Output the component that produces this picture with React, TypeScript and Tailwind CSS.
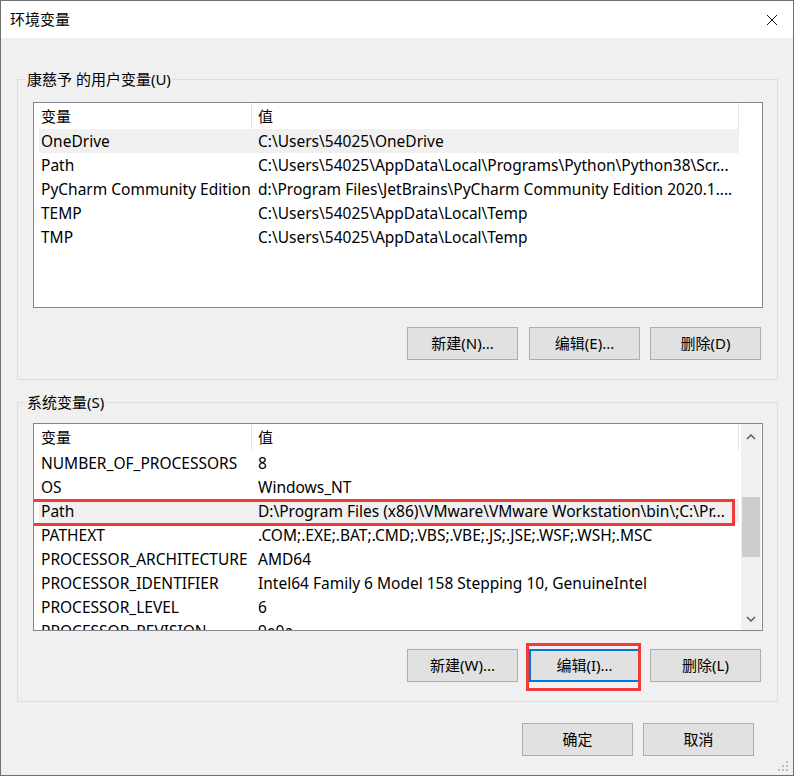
import React from "react";

type Row = [string, string];

const userRows: Row[] = [
  ["OneDrive", "C:\\Users\\54025\\OneDrive"],
  ["Path", "C:\\Users\\54025\\AppData\\Local\\Programs\\Python\\Python38\\Scr..."],
  ["PyCharm Community Edition", "d:\\Program Files\\JetBrains\\PyCharm Community Edition 2020.1...."],
  ["TEMP", "C:\\Users\\54025\\AppData\\Local\\Temp"],
  ["TMP", "C:\\Users\\54025\\AppData\\Local\\Temp"],
];

const sysRows: Row[] = [
  ["NUMBER_OF_PROCESSORS", "8"],
  ["OS", "Windows_NT"],
  ["Path", "D:\\Program Files (x86)\\VMware\\VMware Workstation\\bin\\;C:\\Pr..."],
  ["PATHEXT", ".COM;.EXE;.BAT;.CMD;.VBS;.VBE;.JS;.JSE;.WSF;.WSH;.MSC"],
  ["PROCESSOR_ARCHITECTURE", "AMD64"],
  ["PROCESSOR_IDENTIFIER", "Intel64 Family 6 Model 158 Stepping 10, GenuineIntel"],
  ["PROCESSOR_LEVEL", "6"],
  ["PROCESSOR_REVISION", "9e0a"],
];

function Chevron({ up }: { up?: boolean }) {
  return (
    <svg width="10" height="6" viewBox="0 0 10 6">
      <polyline
        points={up ? "1,5 5,1 9,5" : "1,1 5,5 9,1"}
        fill="none"
        stroke="#606060"
        strokeWidth="1.6"
      />
    </svg>
  );
}

function Button(props: { label: string; focused?: boolean; marked?: boolean }) {
  return (
    <div className="relative">
      <div
        className={
          props.focused
            ? "w-[111px] h-[33px] flex items-center justify-center bg-[#e1e1e1] border-2 border-[#0078d7] text-[15px] text-black"
            : "w-[111px] h-[33px] flex items-center justify-center bg-[#e1e1e1] border border-[#adadad] text-[15px] text-black"
        }
      >
        {props.label}
      </div>
      {props.marked && (
        <div className="absolute left-[-3px] top-[-6px] w-[115px] h-[48px] border-[3px] border-[#ef3a3a]"></div>
      )}
    </div>
  );
}

function ListView(props: {
  rows: Row[];
  selected: number;
  headerH: string;
  height: string;
  scroll?: boolean;
  marked?: number;
}) {
  return (
    <div className={"relative w-[730px] bg-white border border-[#828790] overflow-hidden " + props.height}>
      <div className="flex h-full">
        <div className="flex-1 pl-[5px] overflow-hidden">
          {/* header */}
          <div className={"flex " + props.headerH}>
            <div className="w-[213px] pl-[2px] border-r border-[#e5e5e5] flex items-center">变量</div>
            <div className="w-[487px] pl-[6px] border-r border-[#e5e5e5] flex items-center">值</div>
          </div>
          {props.rows.map((r, i) => (
            <div
              key={i}
              className={
                i === props.selected
                  ? "flex w-[700px] h-[24px] pt-[1px] items-center bg-[#f0f0f0] whitespace-nowrap text-[15.5px]"
                  : "flex w-[700px] h-[24px] pt-[1px] items-center whitespace-nowrap text-[15.5px]"
              }
            >
              <div className="w-[213px] pl-[2px] overflow-hidden">{r[0]}</div>
              <div className="w-[487px] pl-[6px] overflow-hidden">{r[1]}</div>
            </div>
          ))}
        </div>
        {props.scroll && (
          <div className="relative w-[20px] mr-[1px] bg-[#f0f0f0] flex flex-col items-center justify-between pt-[10px] pb-[8px]">
            <Chevron up />
            <Chevron />
            <div className="absolute left-[1px] top-[73px] w-[18px] h-[60px] bg-[#cdcdcd]"></div>
          </div>
        )}
      </div>
      {props.marked !== undefined && (
        <div className="absolute left-[-12px] top-[75px] w-[713px] h-[27px] border-[3px] border-[#ef3a3a]"></div>
      )}
    </div>
  );
}

export default function App() {
  return (
    <div className="w-[794px] h-[777px] bg-white font-['Noto_Sans','Noto_Sans_CJK_SC',sans-serif] text-[15px] text-black">
      <div className="relative w-[794px] h-[776px] bg-[#f0f0f0] border border-[#6f6f6f] flex flex-col overflow-hidden">
        {/* title bar */}
        <div className="h-[37px] bg-white flex items-center justify-between pl-[9px] pr-[15px]">
          <span className="text-[15px]">环境变量</span>
          <svg width="12" height="12" viewBox="0 0 12 12">
            <line x1="1" y1="1" x2="11" y2="11" stroke="#111" strokeWidth="1" />
            <line x1="11" y1="1" x2="1" y2="11" stroke="#111" strokeWidth="1" />
          </svg>
        </div>

        {/* user vars */}
        <div className="relative ml-[16px] mt-[41px] w-[761px] border border-[#dcdcdc] pl-[15px] pt-[22px] pb-[19px]">
          <span className="absolute left-[7px] top-[-11px] leading-[20px] px-[2px] bg-[#f0f0f0]">康慈予 的用户变量(U)</span>
          <ListView rows={userRows} selected={0} headerH="h-[26px]" height="h-[206px]" />
          <div className="w-[730px] flex justify-end pr-[2px] mt-[19px]">
            <Button label="新建(N)..." />
            <div className="ml-[11px]"><Button label="编辑(E)..." /></div>
            <div className="ml-[10px]"><Button label="删除(D)" /></div>
          </div>
        </div>

        {/* system vars */}
        <div className="relative ml-[16px] mt-[22px] w-[761px] border border-[#dcdcdc] pl-[15px] pt-[20px] pb-[19px]">
          <span className="absolute left-[7px] top-[-11px] leading-[20px] px-[2px] bg-[#f0f0f0]">系统变量(S)</span>
          <ListView rows={sysRows} selected={2} headerH="h-[27px]" height="h-[208px]" scroll marked={2} />
          <div className="w-[730px] flex justify-end pr-[2px] mt-[18px]">
            <Button label="新建(W)..." />
            <div className="ml-[11px]"><Button label="编辑(I)..." focused marked /></div>
            <div className="ml-[10px]"><Button label="删除(L)" /></div>
          </div>
        </div>

        {/* dialog buttons */}
        <div className="flex justify-end pr-[39px] mt-[21px]">
          <Button label="确定" />
          <div className="ml-[10px]"><Button label="取消" /></div>
        </div>

        {/* resize grip */}
        <svg className="absolute right-[3px] bottom-[2px]" width="12" height="12" viewBox="0 0 12 12">
          <rect x="8" y="0" width="2" height="2" fill="#bcbcbc" />
          <rect x="4" y="4" width="2" height="2" fill="#bcbcbc" />
          <rect x="8" y="4" width="2" height="2" fill="#bcbcbc" />
          <rect x="0" y="8" width="2" height="2" fill="#bcbcbc" />
          <rect x="4" y="8" width="2" height="2" fill="#bcbcbc" />
          <rect x="8" y="8" width="2" height="2" fill="#bcbcbc" />
        </svg>
      </div>
    </div>
  );
}
